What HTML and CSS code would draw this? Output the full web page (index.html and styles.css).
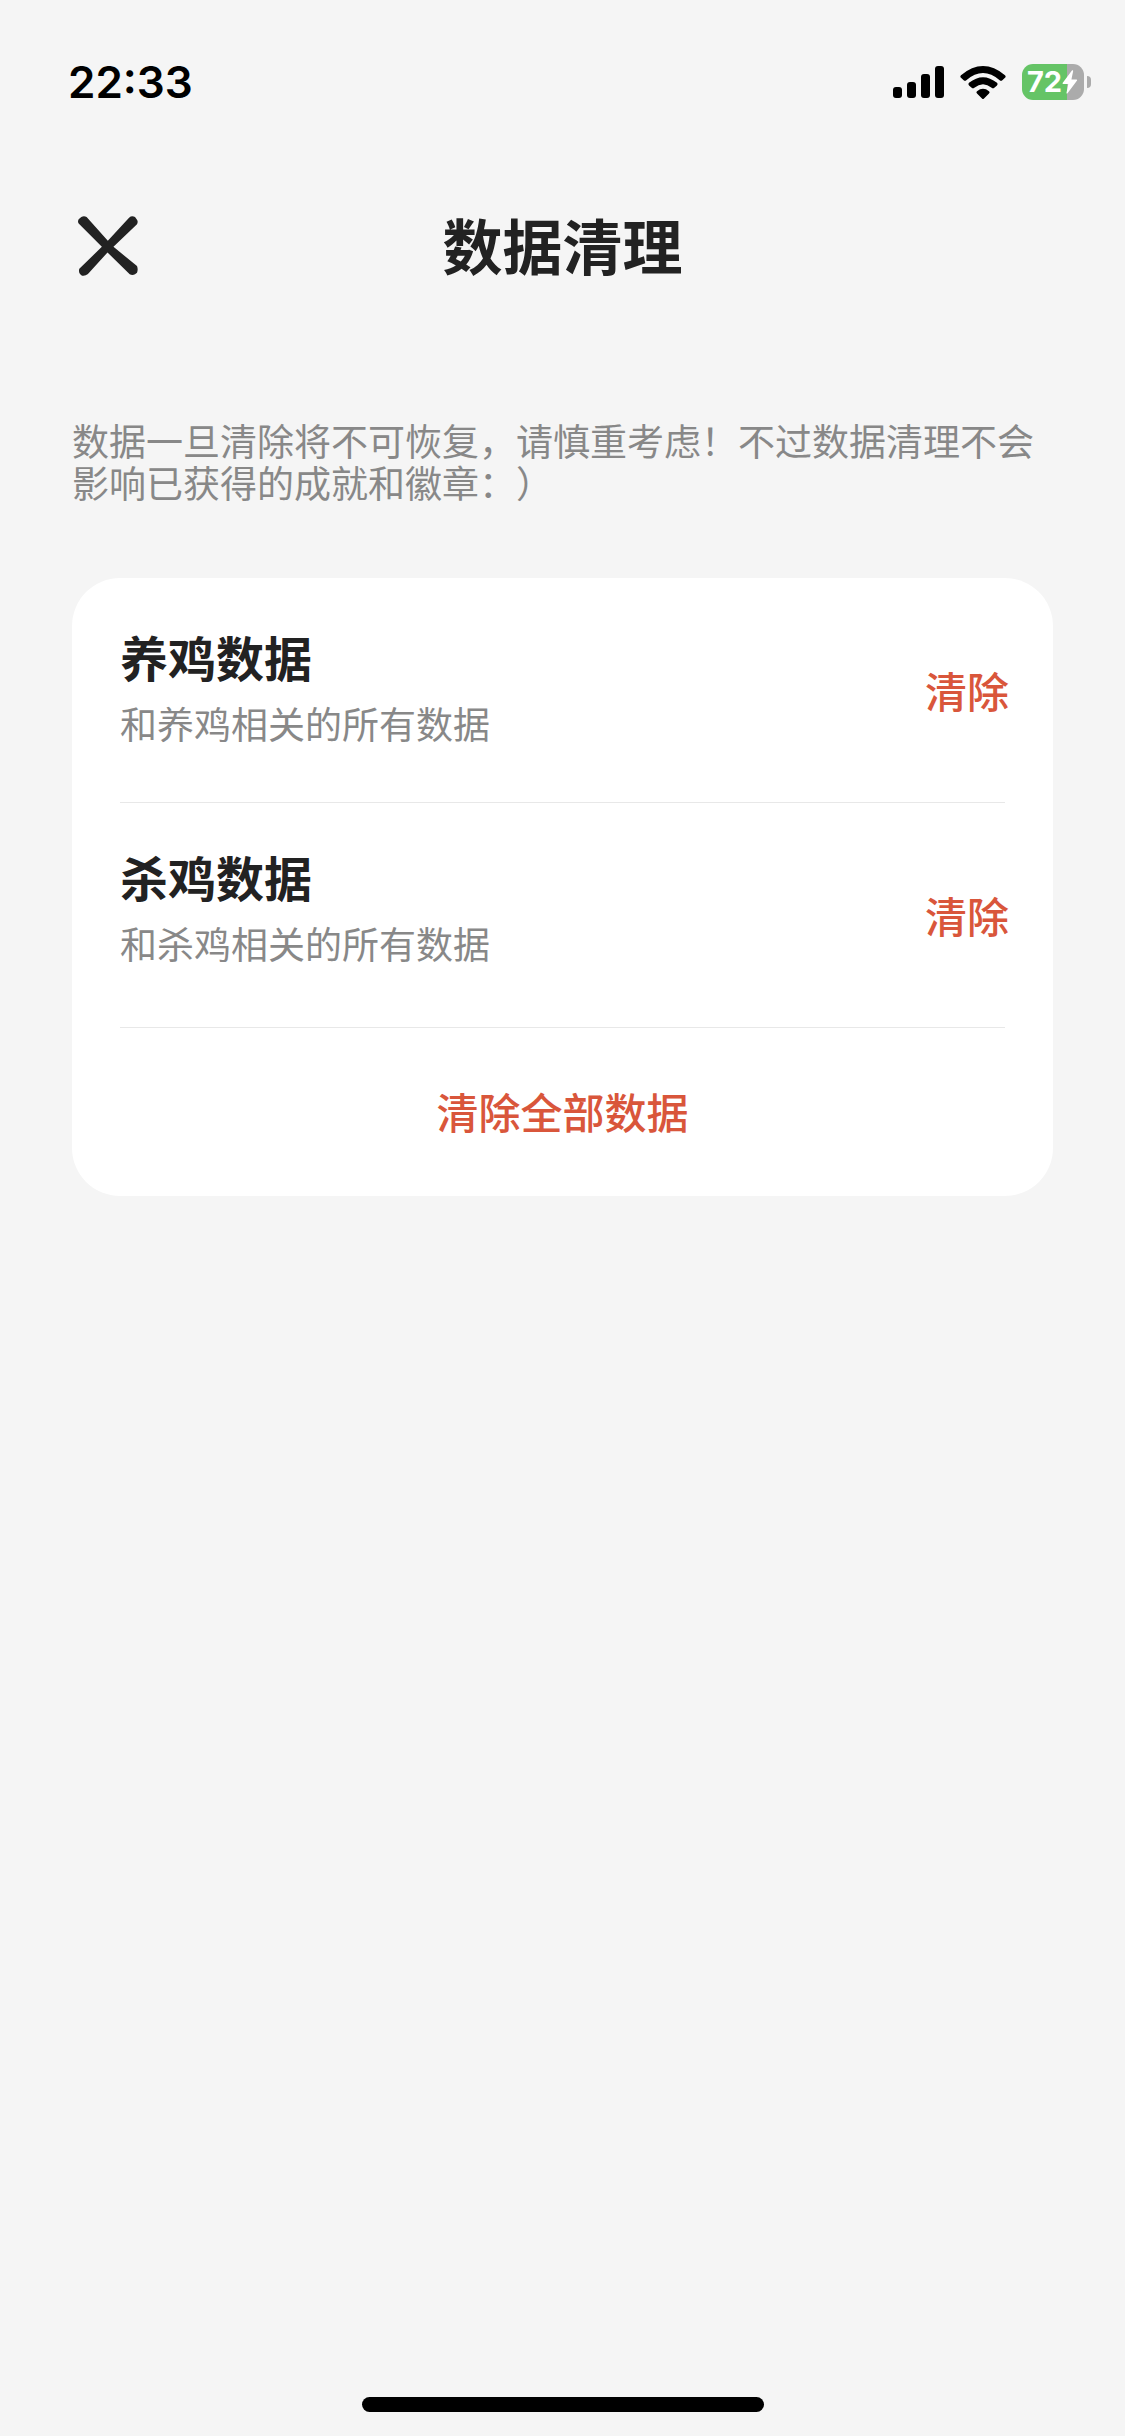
FILE: index.html
```html
<!DOCTYPE html>
<html lang="zh-CN">
<head>
<meta charset="utf-8">
<meta name="viewport" content="width=device-width, initial-scale=1">
<title>数据清理</title>
<link rel="stylesheet" href="styles.css">
</head>
<body>
<div class="status-bar">
  <time class="clock">22:33</time>
  <div class="indicators">
    <svg class="signal" viewBox="0 0 51 32" aria-hidden="true">
      <rect x="0" y="21" width="9" height="11" rx="3"/>
      <rect x="14" y="16" width="9" height="16" rx="3"/>
      <rect x="28" y="8" width="9" height="24" rx="3"/>
      <rect x="42" y="0" width="9" height="32" rx="3"/>
    </svg>
    <svg class="wifi" viewBox="240 42 138 104" aria-hidden="true">
      <path d="M243 72Q309 17 375 72Q379 76 375 80L367 87Q363 90 359 87Q309 44 259 87Q255 90 251 87L243 80Q239 76 243 72Z"/>
      <path d="M267 95Q309 61 351 95Q355 99 351 103L343 110Q339 113 335 110Q309 89 283 110Q279 113 275 110L267 103Q263 99 267 95Z"/>
      <path d="M291 120Q309 106 327 120Q331 123 327 127L312 142Q309 145 306 142L291 127Q287 123 291 120Z"/>
    </svg>
    <div class="battery">
      <div class="battery-body">
        <span class="battery-level">72</span>
        <svg class="bolt" viewBox="0 0 44 68" aria-hidden="true">
          <path d="M28 1L1 37Q0 40 3 40L17 40L12 65Q12 68 15 66L42 30Q43 27 40 27L26 27L31 3Q31 0 28 1Z"/>
        </svg>
      </div>
      <div class="battery-cap"></div>
    </div>
  </div>
</div>

<header class="header">
  <button class="close" type="button" aria-label="关闭">
    <svg class="close-icon" viewBox="54 77 181 181" aria-hidden="true">
      <path d="M56 100Q52 94 56 87L64 80Q72 75 80 80L144 152L208 82Q216 75 226 80L232 88Q236 94 232 102L161 170L232 228Q236 238 232 248L226 253Q218 257 210 253L143 187L84 252Q76 259 66 257L60 252Q55 244 58 236L126 170Z"/>
    </svg>
  </button>
  <h1 class="title">数据清理</h1>
</header>

<main class="content">
  <p class="notice">数据一旦清除将不可恢复，请慎重考虑！不过数据清理不会影响已获得的成就和徽章：）</p>
  <section class="card">
    <div class="row">
      <div class="row-text">
        <h2 class="row-title">养鸡数据</h2>
        <p class="row-desc">和养鸡相关的所有数据</p>
      </div>
      <button class="action" type="button">清除</button>
    </div>
    <div class="row">
      <div class="row-text">
        <h2 class="row-title">杀鸡数据</h2>
        <p class="row-desc">和杀鸡相关的所有数据</p>
      </div>
      <button class="action" type="button">清除</button>
    </div>
    <button class="action action-all" type="button">清除全部数据</button>
  </section>
</main>

<div class="home-indicator"></div>
</body>
</html>
```
FILE: styles.css
```css
* {
  box-sizing: border-box;
}

body {
  margin: 0;
  min-height: 100vh;
  display: flex;
  flex-direction: column;
  background: #f5f5f5;
  color: #222;
  font-family: "Noto Sans CJK SC", sans-serif;
  text-spacing-trim: space-all;
}

h1,
h2,
p {
  margin: 0;
}

button {
  padding: 0;
  border: 0;
  background: none;
  font: inherit;
  color: inherit;
  cursor: pointer;
}

svg {
  display: block;
}

.status-bar {
  display: flex;
  justify-content: space-between;
  align-items: center;
  padding: 52px 34px 0 68px;
  color: #000;
  font-family: Inter, sans-serif;
}

.clock {
  font-size: 44px;
  line-height: 60px;
  font-weight: 600;
}

.indicators {
  display: flex;
  align-items: center;
  gap: 16px;
}

.signal {
  width: 51px;
  height: 32px;
}

.wifi {
  width: 46px;
  height: 35px;
}

.battery {
  display: flex;
  align-items: center;
  gap: 3px;
}

.battery-body {
  display: flex;
  align-items: center;
  width: 62px;
  height: 36px;
  padding-left: 5px;
  border-radius: 11px;
  background: linear-gradient(to right, #65c466 45px, #ababab 45px);
  color: #fff;
}

.battery-level {
  font-size: 29px;
  line-height: 36px;
  font-weight: 700;
}

.bolt {
  width: 16px;
  height: 24px;
  flex: none;
  fill: #fff;
}

.battery-cap {
  width: 4px;
  height: 12px;
  border-radius: 0 4px 4px 0;
  background: #ababab;
}

.header {
  display: grid;
  grid-template-columns: 1fr auto 1fr;
  align-items: start;
  padding: 86px 78px 0;
}

.close {
  justify-self: start;
  margin-top: 18px;
}

.close-icon {
  width: 60px;
  height: 60px;
  fill: #222;
}

.title {
  font-size: 60px;
  line-height: 92px;
  font-weight: 700;
}

.content {
  flex: 1;
  padding: 129px 72px 0;
}

.notice {
  color: #888;
  font-size: 37px;
  line-height: 42px;
}

.card {
  margin-top: 75px;
  padding: 0 48px;
  border-radius: 48px;
  background: #fff;
}

.row {
  display: flex;
  justify-content: space-between;
  height: 225px;
  padding-top: 41px;
  border-bottom: 1px solid #e8e8e8;
}

.row:first-child .row-text {
  padding-top: 5px;
}

.row-title {
  font-size: 48px;
  line-height: 64px;
  font-weight: 700;
}

.row-desc {
  color: #888;
  font-size: 37px;
  line-height: 70px;
}

.action {
  color: #d9563b;
  font-size: 42px;
  line-height: 64px;
  font-weight: 500;
}

.row .action {
  align-self: center;
  margin: 0 -4px 42px 0;
}

.action-all {
  width: 100%;
  padding: 51px 0 53px;
}

.home-indicator {
  align-self: center;
  width: 402px;
  height: 15px;
  margin-bottom: 24px;
  border-radius: 8px;
  background: #000;
}
```
